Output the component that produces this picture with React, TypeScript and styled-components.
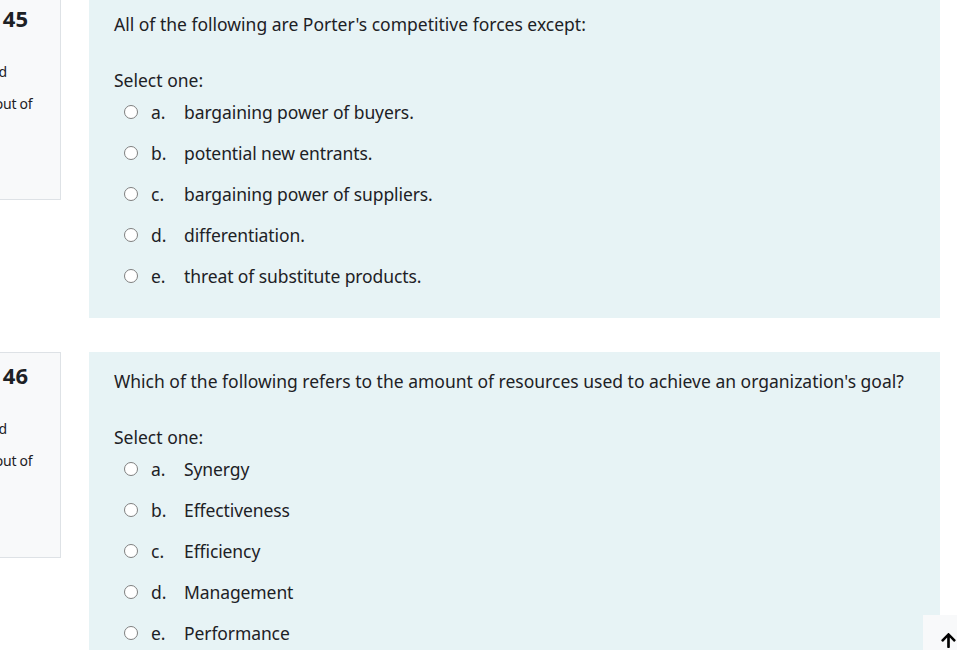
import React from "react";
import styled, { createGlobalStyle } from "styled-components";
import { FaArrowUp } from "react-icons/fa";

const Global = createGlobalStyle`
  html, body { margin: 0; padding: 0; background: #ffffff; overflow: hidden; }
  body { font-family: "Noto Sans", "Open Sans", sans-serif; color: #1d2125; }
`;

const Page = styled.div`
  margin: -5px 0 0 -66px;
  width: 1006px;
  display: flex;
  flex-direction: column;
  gap: 34px;
`;

const Question = styled.div`
  display: flex;
  align-items: flex-start;
  gap: 28px;
`;

const Info = styled.div<{ $h: number }>`
  box-sizing: border-box;
  width: 127px;
  height: ${(p) => p.$h}px;
  flex: none;
  padding: 8px 8px;
  background: #f8f9fa;
  border: 1px solid #dee2e6;
  font-size: 14px;
  line-height: 18px;
`;

const No = styled.h3`
  margin: 0 0 8px;
  font-size: 12.5px;
  font-weight: 400;
  line-height: 28px;
  white-space: nowrap;
`;

const QNo = styled.span`
  margin-left: 3px;
  font-size: 22px;
  font-weight: 700;
`;

const State = styled.div`
  margin-bottom: 14px;
`;

const Grade = styled.div`
  letter-spacing: -0.3px;
`;

const Formulation = styled.div`
  box-sizing: border-box;
  width: 851px;
  background: #e7f3f5;
  padding: 16px 25px 22px;
  font-size: 17.5px;
  line-height: 22px;
`;

const QText = styled.div`
  line-height: 26px;
  margin-bottom: 32px;
`;

const Prompt = styled.div``;

const Options = styled.div`
  display: flex;
  flex-direction: column;
`;

const Option = styled.div`
  display: flex;
  align-items: center;
  height: 41px;
  padding-left: 10px;
`;

const Radio = styled.span`
  box-sizing: border-box;
  width: 14px;
  height: 14px;
  border-radius: 50%;
  border: 1.5px solid #7f7f7f;
  background: #ffffff;
  margin-right: 13px;
  flex: none;
`;

const Letter = styled.span`
  width: 33px;
  flex: none;
`;

const Label = styled.span`
  letter-spacing: -0.1px;
`;

const TopButton = styled.div`
  position: fixed;
  right: -16px;
  bottom: -15px;
  width: 50px;
  height: 50px;
  background: #f8f9fa;
  display: flex;
  align-items: center;
  justify-content: center;
  color: #000;
  font-size: 17px;
`;

type Q = { no: number; text: string; options: string[]; h: number };

const questions: Q[] = [
  {
    no: 45,
    text: "All of the following are Porter's competitive forces except:",
    options: [
      "bargaining power of buyers.",
      "potential new entrants.",
      "bargaining power of suppliers.",
      "differentiation.",
      "threat of substitute products.",
    ],
    h: 205,
  },
  {
    no: 46,
    text: "Which of the following refers to the amount of resources used to achieve an organization's goal?",
    options: ["Synergy", "Effectiveness", "Efficiency", "Management", "Performance"],
    h: 206,
  },
];

const letters = ["a.", "b.", "c.", "d.", "e."];

export default function App() {
  return (
    <>
      <Global />
      <Page>
        {questions.map((q) => (
          <Question key={q.no}>
            <Info $h={q.h}>
              <No>
                Question <QNo>{q.no}</QNo>
              </No>
              <State>Not yet answered</State>
              <Grade>Marked out of 1.00</Grade>
            </Info>
            <Formulation>
              <QText>{q.text}</QText>
              <Prompt>Select one:</Prompt>
              <Options>
                {q.options.map((o, i) => (
                  <Option key={o}>
                    <Radio />
                    <Letter>{letters[i]}</Letter>
                    <Label>{o}</Label>
                  </Option>
                ))}
              </Options>
            </Formulation>
          </Question>
        ))}
      </Page>
      <TopButton>
        <FaArrowUp />
      </TopButton>
    </>
  );
}
